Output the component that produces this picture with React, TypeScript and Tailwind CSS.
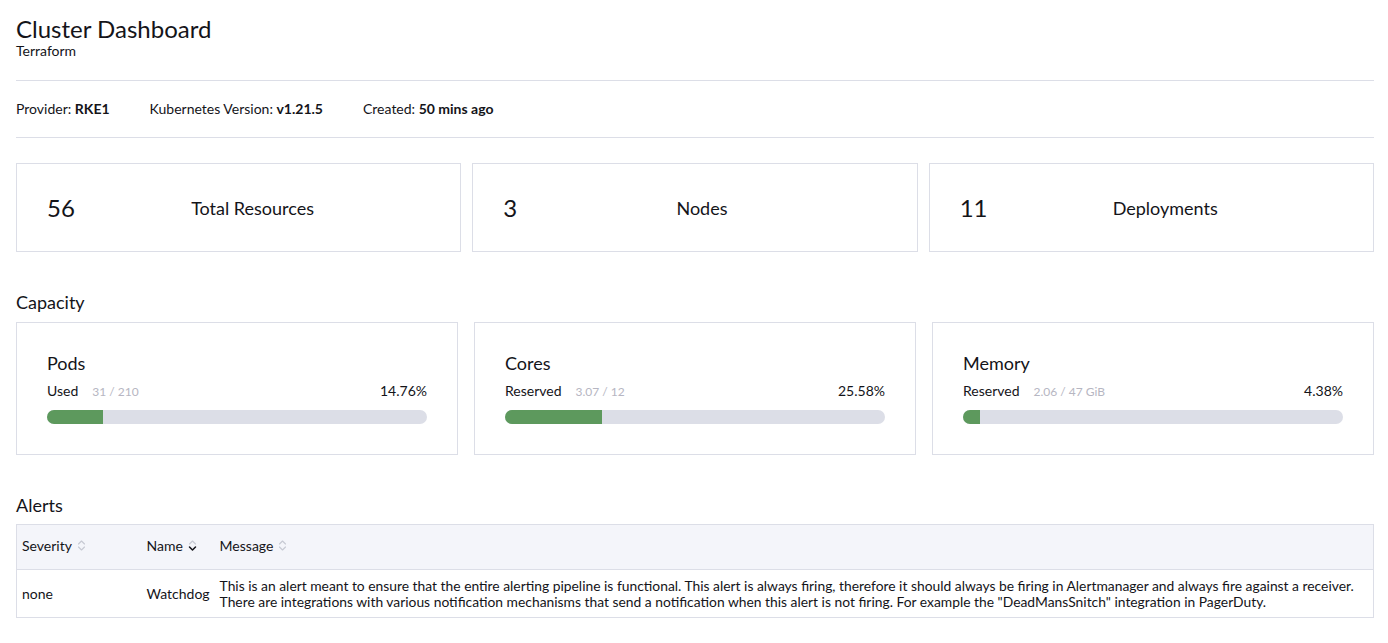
import React from 'react';

const counts = [
  { value: 56, label: 'Total Resources' },
  { value: 3, label: 'Nodes' },
  { value: 11, label: 'Deployments' },
];

const capacity = [
  { title: 'Pods', kind: 'Used', amount: '31 / 210', percent: 14.76 },
  { title: 'Cores', kind: 'Reserved', amount: '3.07 / 12', percent: 25.58 },
  { title: 'Memory', kind: 'Reserved', amount: '2.06 / 47 GiB', percent: 4.38 },
];

const SortIcon = ({ active }: { active?: boolean }) => (
  <svg width="9" height="13" viewBox="0 0 9 13" fill="none" className="ml-[5px] inline-block">
    <path d="M1.5 5 L4.5 2 L7.5 5" stroke="#c7c9d3" strokeWidth="1.1" strokeLinecap="round" strokeLinejoin="round" />
    <path
      d="M1.5 8 L4.5 11 L7.5 8"
      stroke={active ? '#141419' : '#c7c9d3'}
      strokeWidth={active ? 1.5 : 1.1}
      strokeLinecap="round"
      strokeLinejoin="round"
    />
  </svg>
);

export default function App() {
  return (
    <div className="min-h-screen bg-white text-[#141419] pl-4 pr-[14px] pt-4 pb-6 font-['Lato','Liberation_Sans',sans-serif]">
      {/* Header */}
      <div>
        <h1 className="text-[24px] leading-[26px] font-normal">Cluster Dashboard</h1>
        <div className="text-[14px] leading-[17px]">Terraform</div>
      </div>

      <div className="mt-[21px] border-t border-[#dcdee7] pt-[19px] pb-[20px] flex gap-10 text-[14px] leading-[17px]">
        <span>
          Provider: <span className="font-bold">RKE1</span>
        </span>
        <span>
          Kubernetes Version: <span className="font-bold">v1.21.5</span>
        </span>
        <span>
          Created: <span className="font-bold">50 mins ago</span>
        </span>
      </div>
      <div className="border-t border-[#dcdee7]" />

      {/* Counts */}
      <div className="mt-[25px] grid grid-cols-3 gap-[11px]">
        {counts.map(c => (
          <div key={c.label} className="h-[89px] border border-[#dcdee7] px-[30px] flex items-center">
            <span className="text-[24px] leading-[28px]">{c.value}</span>
            <span className="flex-1 text-center text-[18px] leading-[22px]">{c.label}</span>
          </div>
        ))}
      </div>

      {/* Capacity */}
      <h3 className="mt-[39px] text-[18px] leading-[22px]">Capacity</h3>
      <div className="mt-[9px] grid grid-cols-3 gap-4">
        {capacity.map(c => (
          <div key={c.title} className="border border-[#dcdee7] px-[30px] pt-[29px] pb-[30px]">
            <div className="text-[18px] leading-[22px]">{c.title}</div>
            <div className="mt-2 flex items-baseline text-[14px] leading-[17px]">
              <span>{c.kind}</span>
              <span className="ml-[14px] text-[12px] text-[#b6b6c2]">{c.amount}</span>
              <span className="ml-auto">{c.percent.toFixed(2)}%</span>
            </div>
            <div className="mt-[10px] h-[14px] rounded-full bg-[#dcdee7] overflow-hidden">
              <div className="h-full bg-[#5d995d]" style={{ width: `${c.percent}%` }} />
            </div>
          </div>
        ))}
      </div>

      {/* Alerts */}
      <h3 className="mt-[39px] text-[18px] leading-[22px]">Alerts</h3>
      <table className="mt-2 w-full border border-[#dcdee7] border-collapse text-left">
        <thead>
          <tr className="bg-[#f4f5fa] h-[45px] text-[14px]">
            <th className="w-[125px] px-[5px] pb-[3px] font-normal">
              <span className="inline-flex items-center">Severity<SortIcon /></span>
            </th>
            <th className="w-[73px] px-[5px] pb-[3px] font-normal">
              <span className="inline-flex items-center">Name<SortIcon active /></span>
            </th>
            <th className="px-[5px] pb-[3px] font-normal">
              <span className="inline-flex items-center">Message<SortIcon /></span>
            </th>
          </tr>
        </thead>
        <tbody>
          <tr className="border-t border-[#dcdee7] h-[48px] text-[14px]">
            <td className="px-[5px]">none</td>
            <td className="px-[5px]">Watchdog</td>
            <td className="px-[5px] text-[13.85px] leading-[16px]">
              This is an alert meant to ensure that the entire alerting pipeline is functional. This alert is always
              firing, therefore it should always be firing in Alertmanager and always fire against a receiver. There
              are integrations with various notification mechanisms that send a notification when this alert is not
              firing. For example the "DeadMansSnitch" integration in PagerDuty.
            </td>
          </tr>
        </tbody>
      </table>
    </div>
  );
}
